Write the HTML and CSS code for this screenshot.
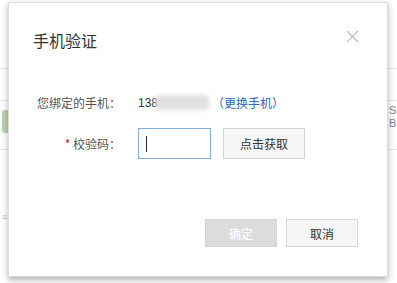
FILE: index.html
```html
<!doctype html>
<html>
	<head>
		<meta http-equiv="Content-Type" content="text/html; charset=utf-8">
		<title>手机验证</title>
		<link rel="stylesheet" href="styles.css">
	</head>
<body>
	<!--底层页面-->
	<div class="page">
		<div class="row row-top"></div>
		<div class="row row-mid"></div>
		<div class="row row-item">
			<span class="thumb"></span>
			<span class="side-text">SI<br>B</span>
		</div>
		<div class="row row-foot"><span class="foot-text">≡</span></div>
	</div>

	<!--弹窗-->
	<div class="dialog">
		<div class="dlg-head">
			<h3 class="dlg-title">手机验证</h3>
			<a href="javascript:void(0)" class="dlg-close">
				<svg width="13" height="13" viewBox="0 0 13 13"><path d="M1 1L12 12M12 1L1 12" stroke="#bdbdbd" stroke-width="1.2" fill="none"/></svg>
			</a>
		</div>
		<div class="dlg-body">
			<div class="form-row">
				<label class="form-label">您绑定的手机：</label>
				<div class="form-value">
					<span class="phone">138</span><span class="mask"></span>
					<a href="javascript:void(0)" class="change">（更换手机）</a>
				</div>
			</div>
			<div class="form-row form-row-code">
				<label class="form-label"><span class="req">*</span> 校验码：</label>
				<div class="form-value">
					<div class="code-input"><span class="caret"></span></div>
					<a href="javascript:void(0)" class="btn btn-get">点击获取</a>
				</div>
			</div>
		</div>
		<div class="dlg-foot">
			<a href="javascript:void(0)" class="btn btn-ok">确定</a>
			<a href="javascript:void(0)" class="btn btn-cancel">取消</a>
		</div>
	</div>
</body>
</html>
```

FILE: styles.css
```css
*{margin:0;padding:0;box-sizing:border-box;}
a{text-decoration:none;color:#333;}
body{font-size:12px;font-family:"Liberation Sans","Noto Sans CJK SC",sans-serif;color:#333;background:#fff;width:397px;height:283px;overflow:hidden;position:relative;}

.page{width:100%;}
.page .row{border-bottom:1px solid #e8e8e8;position:relative;}
.page .row-top{height:69px;}
.page .row-mid{height:32px;}
.page .row-item{height:49px;}
.page .row-foot{height:133px;border-bottom:0;}
.thumb{position:absolute;left:2px;top:9px;width:8px;height:23px;border-radius:3px;background:#a6c99a;opacity:.8;}
.side-text{position:absolute;left:389px;top:3px;font-size:11px;line-height:13px;color:#7a8590;}
.foot-text{position:absolute;left:2px;top:62px;font-size:9px;color:#c4c4c4;}

.dialog{position:absolute;left:8px;top:2px;width:380px;height:275px;background:#fff;border:1px solid #dcdcdc;
	box-shadow:0 3px 6px rgba(0,0,0,.3);display:flex;flex-direction:column;}
.dlg-head{position:relative;padding:27px 24px 0;}
.dlg-title{font-size:16px;line-height:20px;font-weight:normal;color:#333;font-family:"Noto Sans CJK SC",sans-serif;}
.dlg-close{position:absolute;right:28px;top:27px;width:13px;height:13px;display:block;}
.dlg-close svg{display:block;}

.dlg-body{padding-top:37px;}
.form-row{display:flex;align-items:center;height:31px;}
.form-row-code{margin-top:10px;}
.form-label{width:112px;text-align:right;color:#555;font-family:"Noto Sans CJK SC",sans-serif;}
.req{color:#c81623;}
.form-value{display:flex;align-items:center;margin-left:17px;}
.phone{color:#333;font-size:12px;}
.mask{display:inline-block;width:54px;height:15px;background:#e0e0e0;border-radius:5px;filter:blur(2px);margin-left:-3px;position:relative;}
.change{color:#2a6cb8;margin-left:3px;font-family:"Noto Sans CJK SC",sans-serif;}

.code-input{width:73px;height:31px;border:1px solid #80aee0;position:relative;}
.caret{position:absolute;left:7px;top:7px;width:1px;height:16px;background:#222;}
.btn{display:flex;align-items:center;justify-content:center;font-family:"Noto Sans CJK SC",sans-serif;font-size:12px;}
.btn-get{width:82px;height:31px;margin-left:12px;background:#f6f6f6;border:1px solid #d4d4d4;color:#333;}

.dlg-foot{margin-top:auto;display:flex;justify-content:flex-end;gap:9px;padding:0 29px 29px;}
.btn-ok{width:72px;height:28px;background:#dcdcdc;border:1px solid #d4d4d4;color:#fff;}
.btn-cancel{width:72px;height:28px;background:#f6f6f6;border:1px solid #d8d8d8;color:#333;}
```
